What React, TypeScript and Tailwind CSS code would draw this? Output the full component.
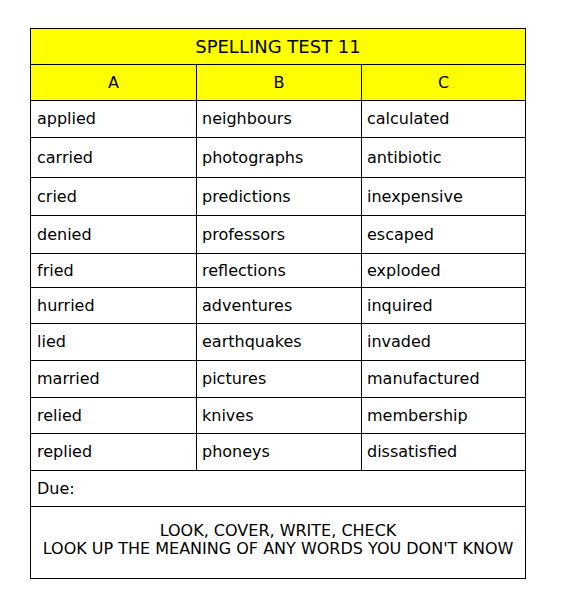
import React from "react"

const rows: { h: string; words: [string, string, string] }[] = [
  { h: "h-[37px]", words: ["applied", "neighbours", "calculated"] },
  { h: "h-[40px]", words: ["carried", "photographs", "antibiotic"] },
  { h: "h-[38px]", words: ["cried", "predictions", "inexpensive"] },
  { h: "h-[38px]", words: ["denied", "professors", "escaped"] },
  { h: "h-[34px]", words: ["fried", "reflections", "exploded"] },
  { h: "h-[36px]", words: ["hurried", "adventures", "inquired"] },
  { h: "h-[37px]", words: ["lied", "earthquakes", "invaded"] },
  { h: "h-[37px]", words: ["married", "pictures", "manufactured"] },
  { h: "h-[36px]", words: ["relied", "knives", "membership"] },
  { h: "h-[37px]", words: ["replied", "phoneys", "dissatisfied"] },
]

const font = { fontFamily: '"Comic Sans MS", "DejaVu Sans", sans-serif' }

export default function App() {
  return (
    <div className="w-[568px] h-[608px] bg-white pt-[28px] pl-[30px]" style={font}>
      <div className="w-[496px] border border-black text-black text-[16px]">
        <div className="h-[36px] bg-[#ffff00] border-b border-black flex items-center justify-center text-[18px]">
          SPELLING TEST 11
        </div>
        <div className="h-[36px] bg-[#ffff00] border-b border-black flex">
          <div className="w-[166px] border-r border-black flex items-center justify-center">A</div>
          <div className="w-[165px] border-r border-black flex items-center justify-center">B</div>
          <div className="flex-1 flex items-center justify-center">C</div>
        </div>
        {rows.map((r) => (
          <div key={r.words[0]} className={`${r.h} border-b border-black flex`}>
            <div className="w-[166px] border-r border-black flex items-center pl-[6px]">{r.words[0]}</div>
            <div className="w-[165px] border-r border-black flex items-center pl-[5px]">{r.words[1]}</div>
            <div className="flex-1 flex items-center pl-[5px]">{r.words[2]}</div>
          </div>
        ))}
        <div className="h-[36px] border-b border-black flex items-center pl-[6px]">Due:</div>
        <div className="h-[71px] flex flex-col items-center justify-center pb-[5px] leading-[18px]">
          <div>LOOK, COVER, WRITE, CHECK</div>
          <div>LOOK UP THE MEANING OF ANY WORDS YOU DON'T KNOW</div>
        </div>
      </div>
    </div>
  )
}
